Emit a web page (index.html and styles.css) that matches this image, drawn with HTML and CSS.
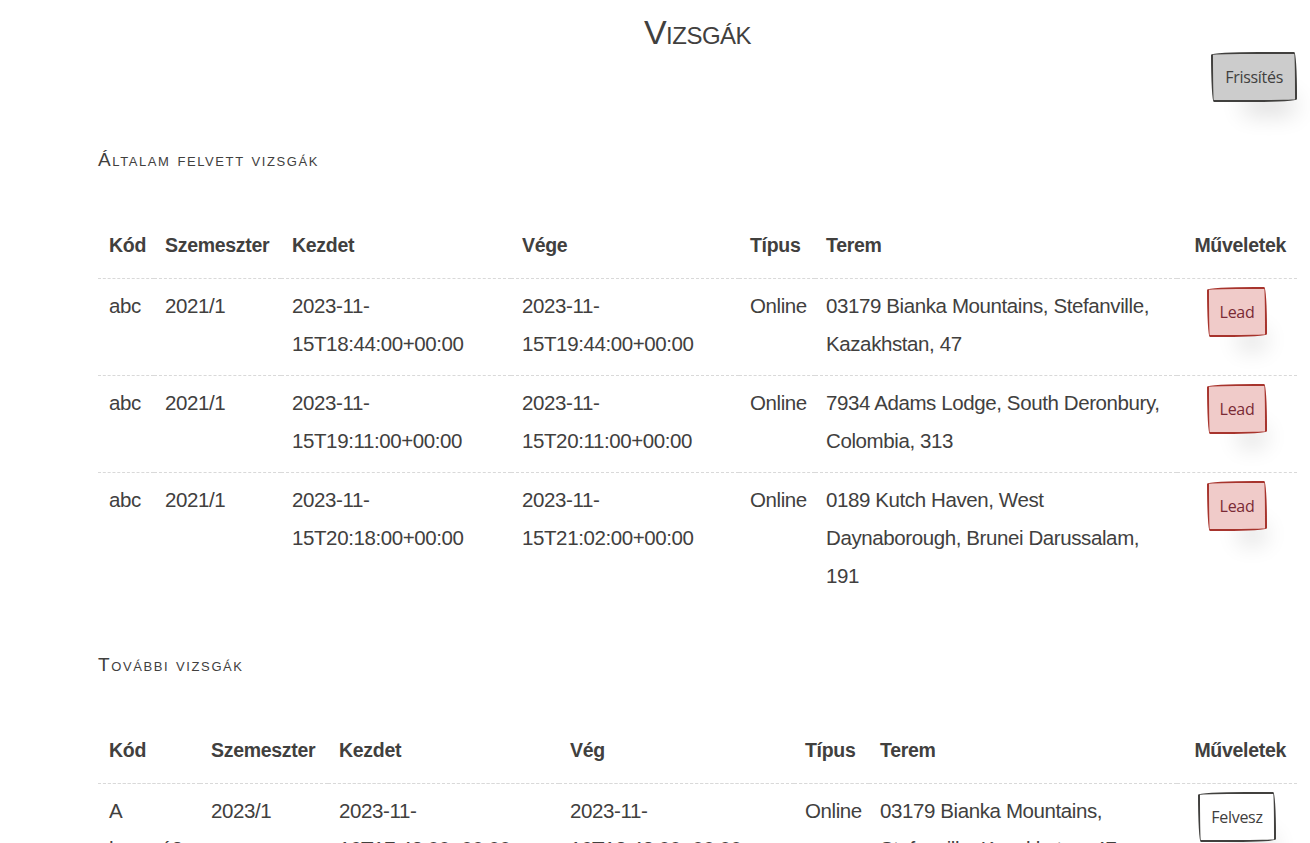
FILE: index.html
```html
<!DOCTYPE html>
<html lang="hu">
<head>
<meta charset="utf-8">
<title>Vizsgák</title>
<link rel="stylesheet" href="styles.css">
</head>
<body>
<main class="page">
  <h1 class="title">Vizsgák</h1>
  <div class="toolbar">
    <button class="btn btn-gray">Frissítés</button>
  </div>

  <h3 class="section-title">Általam felvett vizsgák</h3>
  <table class="exams exams-mine">
    <colgroup>
      <col class="c-kod"><col class="c-sem"><col class="c-start"><col class="c-end"><col class="c-type"><col class="c-room"><col class="c-act">
    </colgroup>
    <thead>
      <tr><th>Kód</th><th>Szemeszter</th><th>Kezdet</th><th>Vége</th><th>Típus</th><th>Terem</th><th class="act">Műveletek</th></tr>
    </thead>
    <tbody>
      <tr>
        <td>abc</td><td>2021/1</td><td>2023-11-15T18:44:00+00:00</td><td>2023-11-15T19:44:00+00:00</td><td class="nowrap">Online</td><td>03179 Bianka Mountains, Stefanville, Kazakhstan, 47</td>
        <td class="act"><button class="btn btn-danger">Lead</button></td>
      </tr>
      <tr>
        <td>abc</td><td>2021/1</td><td>2023-11-15T19:11:00+00:00</td><td>2023-11-15T20:11:00+00:00</td><td class="nowrap">Online</td><td>7934 Adams Lodge, South Deronbury, Colombia, 313</td>
        <td class="act"><button class="btn btn-danger">Lead</button></td>
      </tr>
      <tr>
        <td>abc</td><td>2021/1</td><td>2023-11-15T20:18:00+00:00</td><td>2023-11-15T21:02:00+00:00</td><td class="nowrap">Online</td><td>0189 Kutch Haven, West Daynaborough, Brunei Darussalam, 191</td>
        <td class="act"><button class="btn btn-danger">Lead</button></td>
      </tr>
    </tbody>
  </table>

  <h3 class="section-title">További vizsgák</h3>
  <table class="exams exams-other">
    <colgroup>
      <col class="c-kod"><col class="c-sem"><col class="c-start"><col class="c-end"><col class="c-type"><col class="c-room"><col class="c-act">
    </colgroup>
    <thead>
      <tr><th>Kód</th><th>Szemeszter</th><th>Kezdet</th><th>Vég</th><th>Típus</th><th>Terem</th><th class="act">Műveletek</th></tr>
    </thead>
    <tbody>
      <tr>
        <td>A hosszú2</td><td>2023/1</td><td>2023-11-16T17:42:00+00:00</td><td>2023-11-16T18:42:00+00:00</td><td class="nowrap">Online</td><td>03179 Bianka Mountains, Stefanville, Kazakhstan, 47</td>
        <td class="act"><button class="btn btn-white">Felvesz</button></td>
      </tr>
    </tbody>
  </table>
</main>
</body>
</html>
```

FILE: styles.css
```css
html, body {
  margin: 0;
  padding: 0;
  background: #fff;
}

body {
  color: #41403e;
  font-family: "Liberation Sans", Arial, sans-serif;
  font-size: 20.5px;
  line-height: 38px;
  letter-spacing: -0.4px;
}

.page {
  padding: 0 13px 40px 98px;
}

.title {
  margin: 0;
  padding-top: 12px;
  text-align: center;
  font-family: "Liberation Sans", Arial, sans-serif;
  font-variant: small-caps;
  font-weight: normal;
  font-size: 34px;
  line-height: 40px;
  letter-spacing: -0.5px;
}

.toolbar {
  display: flex;
  justify-content: flex-end;
}

.btn {
  font-family: "Open Sans", "Liberation Sans", sans-serif;
  font-size: 16px;
  line-height: 22px;
  padding: 12px 11px;
  border: 2px solid #41403e;
  color: #41403e;
  background: #fff;
  border-radius: 255px 15px 225px 15px / 15px 225px 15px 255px;
  box-shadow: 15px 28px 25px -18px rgba(0, 0, 0, 0.2);
  cursor: pointer;
  letter-spacing: -0.3px;
}

.btn-gray {
  background: #cccccc;
  padding: 12px 12px;
}

.btn-danger {
  background: #f0cbc9;
  border-color: #a7342d;
  color: #7a2a35;
}

.btn-white {
  background: #fff;
}

.section-title {
  margin: 46px 0 0 0;
  font-family: "Liberation Sans", Arial, sans-serif;
  font-variant: small-caps;
  font-weight: normal;
  font-size: 19px;
  line-height: 24px;
  letter-spacing: 1.6px;
}

.exams {
  width: 100%;
  table-layout: fixed;
  border-collapse: collapse;
  margin-top: 48px;
}

.exams th,
.exams td {
  padding: 8px 11px 12px;
  text-align: left;
  vertical-align: top;
  overflow-wrap: break-word;
}

.exams th {
  font-weight: bold;
  font-size: 19.5px;
  letter-spacing: -0.3px;
  white-space: nowrap;
  border-bottom: 1px dashed #d9d9d9;
  padding-top: 6px;
  padding-bottom: 14px;
}

.exams .nowrap {
  white-space: nowrap;
}

.exams tbody tr + tr td {
  border-top: 1px dashed #d9d9d9;
}

.exams .act {
  text-align: center;
}

.exams th.act {
  text-align: right;
}

.exams-mine .c-kod { width: 56px; }
.exams-mine .c-sem { width: 127px; }
.exams-mine .c-start { width: 230px; }
.exams-mine .c-end { width: 228px; }
.exams-mine .c-type { width: 76px; }
.exams-mine .c-room { width: 362px; }
.exams-mine .c-act { width: 120px; }

.exams-other .c-kod { width: 102px; }
.exams-other .c-sem { width: 128px; }
.exams-other .c-start { width: 231px; }
.exams-other .c-end { width: 235px; }
.exams-other .c-type { width: 75px; }
.exams-other .c-room { width: 308px; }
.exams-other .c-act { width: 120px; }
```
